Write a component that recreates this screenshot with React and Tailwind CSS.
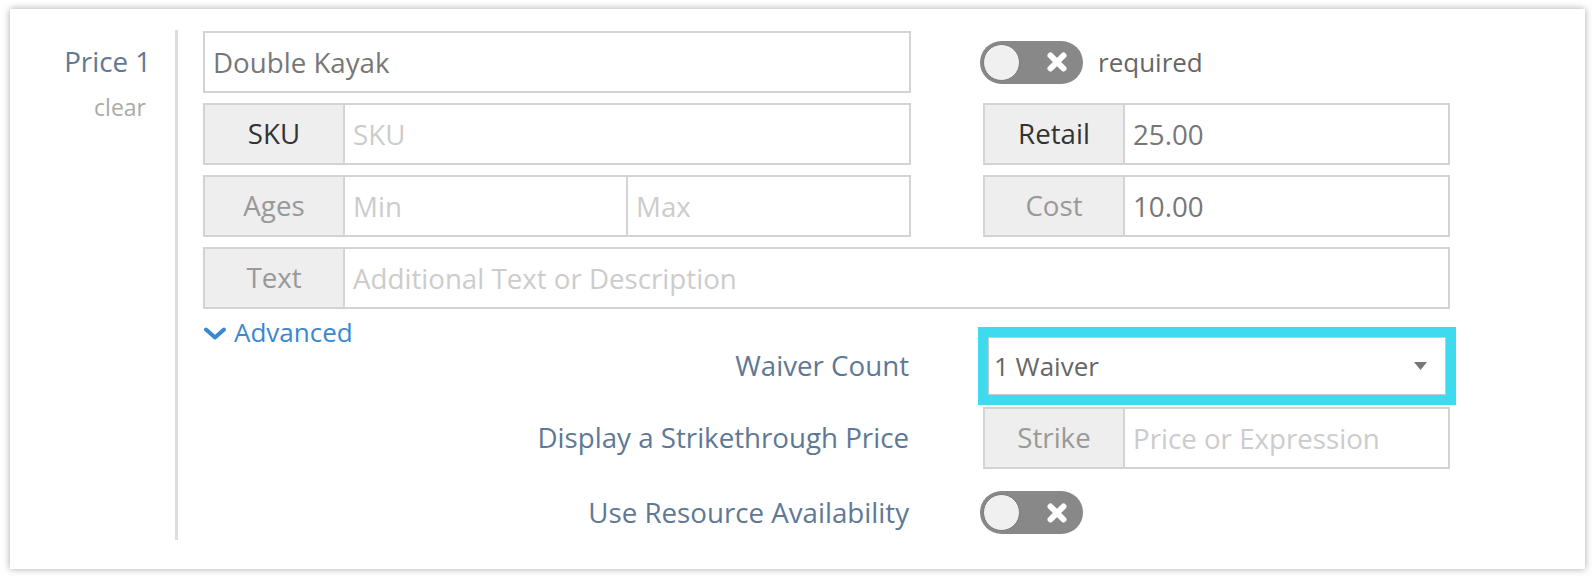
import { useState } from 'react';

const Toggle = () => (
    <div className="flex items-center w-[103px] h-[43px] rounded-full bg-[#888] pl-[3px] -ml-[3px] shrink-0">
        <div className="w-[37px] h-[37px] rounded-full bg-[#f0f0f0] border border-[#777]" />
        <svg className="ml-[25px]" width="24" height="24" viewBox="0 0 24 24">
            <path d="M5.5 5.5L18.5 18.5M18.5 5.5L5.5 18.5" stroke="#fff" strokeWidth="6" strokeLinecap="round" />
        </svg>
    </div>
)

const Group = ({ label, dark, children, className = '' }) => (
    <div className={`flex h-[62px] border-2 border-[#d3d3d3] bg-white ${className}`}>
        <div className={`w-[140px] shrink-0 bg-[#eee] border-r-2 border-[#d3d3d3] flex items-center justify-center ${dark ? 'text-[#333]' : 'text-[#999]'}`}>
            {label}
        </div>
        {children}
    </div>
)

const Field = ({ value, placeholder, className = '' }) => (
    <input
        type="text"
        readOnly
        defaultValue={value}
        placeholder={placeholder}
        className={`min-w-0 flex-1 h-full pl-[8px] text-[#777] placeholder:text-[#ccc] outline-none bg-white ${className}`}
    />
)

export default function App() {
    const [open] = useState(true);

    return (
        <div className="min-h-screen bg-white pl-[10px] pt-[9px] font-['Open_Sans',sans-serif] text-[27.7px]">
            <div className="w-[1575px] bg-white shadow-[0_0_7px_rgba(0,0,0,0.35)] flex pt-[21px] pb-[29px]">
                <div className="w-[165px] shrink-0 pr-[24px] text-right">
                    <div className="h-[62px] mt-[1px] flex items-center justify-end text-[#5e7895]">Price 1</div>
                    <div className="text-[23px] text-[#aaa] leading-[36px] -mt-[4px] pr-[5px]">clear</div>
                </div>

                <div className="border-l-[3px] border-[#ddd] pl-[25px] pt-[1px] pb-[6px]">
                    <div className="grid grid-cols-[708px_467px] gap-x-[72px] gap-y-[10px]">
                        <div className="flex h-[62px] border-2 border-[#d3d3d3]">
                            <Field value="Double Kayak" />
                        </div>
                        <div className="flex items-center gap-[15px]">
                            <Toggle />
                            <span className="text-[26px] text-[#666]">required</span>
                        </div>

                        <Group label="SKU" dark>
                            <Field placeholder="SKU" />
                        </Group>
                        <Group label="Retail" dark>
                            <Field value="25.00" />
                        </Group>

                        <Group label="Ages">
                            <Field placeholder="Min" />
                            <Field placeholder="Max" className="border-l-2 border-[#d3d3d3]" />
                        </Group>
                        <Group label="Cost">
                            <Field value="10.00" />
                        </Group>

                        <Group label="Text" className="col-span-2">
                            <Field placeholder="Additional Text or Description" />
                        </Group>
                    </div>

                    <div className="h-[28px] pt-[5px]">
                        <button className="flex items-center gap-[7px] leading-[37px] text-[26px] text-[#3a88d0] cursor-pointer">
                            <svg width="24" height="13" viewBox="0 0 24 13" className="mt-[2px]">
                                <path d="M3 2.5L12 10.5L21 2.5" fill="none" stroke="#3a88d0" strokeWidth="4" strokeLinecap="round" strokeLinejoin="round" />
                            </svg>
                            Advanced
                        </button>
                    </div>

                    {open && (
                        <div className="grid grid-cols-[708px_467px] gap-x-[72px] text-[#5e7895]">
                            <div className="h-[58px] flex items-center justify-end pr-[2px]">Waiver Count</div>
                            <div className="ml-[5px] mr-[4px] h-[58px] flex items-center justify-between pl-[5px] pr-[18px] bg-white border border-[#c8c8c8] shadow-[0_0_0_10px_#3ddbed] text-[#666] text-[26px]">
                                <span>1 Waiver</span>
                                <svg width="13" height="8" viewBox="0 0 13 8">
                                    <path d="M0 0H13L6.5 8Z" fill="#777" />
                                </svg>
                            </div>

                            <div className="mt-[12px] h-[62px] flex items-center justify-end pr-[2px]">Display a Strikethrough Price</div>
                            <Group label="Strike" className="mt-[12px]">
                                <Field placeholder="Price or Expression" />
                            </Group>

                            <div className="mt-[22px] h-[43px] flex items-center justify-end pr-[2px]">Use Resource Availability</div>
                            <div className="mt-[22px] flex items-center">
                                <Toggle />
                            </div>
                        </div>
                    )}
                </div>
            </div>
        </div>
    )
}
